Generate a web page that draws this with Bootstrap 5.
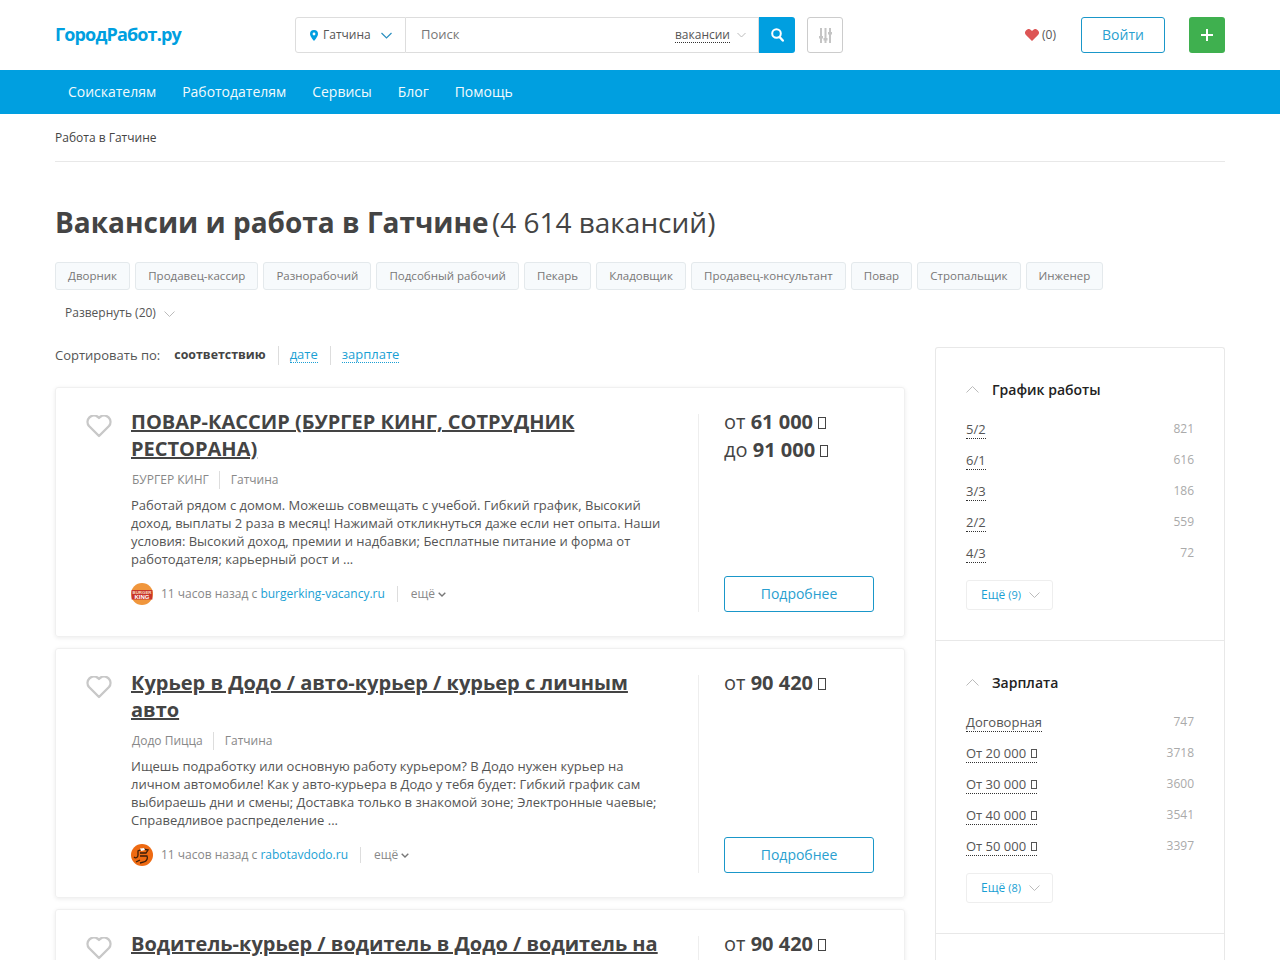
<!DOCTYPE html>
<html lang="ru">
<head>
    <meta charset="UTF-8">
    <meta name="viewport" content="width=device-width, initial-scale=1.0">
    <link href="https://cdn.jsdelivr.net/npm/bootstrap@5.3.0/dist/css/bootstrap.min.css" rel="stylesheet">
    <script src="https://cdn.jsdelivr.net/npm/bootstrap@5.3.0/dist/js/bootstrap.bundle.min.js"></script>
    <title>Вакансии и работа в Гатчине</title>
    <style>
        html, body { height: 960px; overflow: hidden; }
        body { font-family: "Open Sans", "Liberation Sans", sans-serif; font-size: 13px; color: #444; background: #fff; }
        a { color: inherit; }
        .wrap-main { width: 1170px; margin: 0 auto; }
        /* the rouble sign has no glyph on the page, it shows as an empty box */
        .rub-box { display: inline-block; width: .38em; height: .6em; border: 1px solid currentColor; vertical-align: -.02em; }

        /* header */
        .top-head { height: 70px; }
        .site-logo { width: 240px; font-size: 18px; font-weight: 700; color: #009fe0; letter-spacing: -.85px; text-decoration: none; margin-top: -2px; }
        .search-box { width: 500px; height: 36px; }
        .city-pick { width: 111px; border: 1px solid #ddd; border-radius: 3px 0 0 3px; padding-left: 14px; font-size: 12px; color: #555; }
        .city-pick .pin { margin-right: 5px; }
        .city-pick .arr { margin-left: 10px; }
        .search-field { flex: 1; border: 1px solid #ddd; border-left: 0; padding: 0 12px 0 15px; }
        .search-field span.ph { color: #777; font-size: 13px; }
        .kind-pick { font-size: 12px; color: #555; border-bottom: 1px dotted #333; line-height: 15px; margin-right: 7px; }
        .search-go { width: 36px; height: 36px; background: #009fe0; border: 0; border-radius: 0 3px 3px 0; padding: 0; }
        .filter-btn { width: 36px; height: 36px; border: 1px solid #ccc; border-radius: 3px; margin-left: 12px; }
        .fav-link { font-size: 12px; color: #555; margin-right: 25px; }
        .fav-link svg { margin-right: 3px; }
        .login-btn { width: 84px; height: 36px; border: 1px solid #1a97c9; border-radius: 3px; color: #2a9fd0; font-size: 14px; padding: 0; line-height: 34px; margin-right: 24px; }
        .plus-btn { width: 36px; height: 36px; border: 0; border-radius: 3px; background: #3fb04f; padding: 0; }

        .blue-bar { height: 44px; background: #009fe0; }
        .blue-bar .nav-link { color: #fff; font-size: 13.98px; padding: 0; margin: 0 13px; line-height: 44px; opacity: .95; }

        .crumbs { height: 48px; line-height: 47px; font-size: 12px; color: #444; border-bottom: 1px solid #e8e8e8; }

        .page-title { margin: 43px 0 0; height: 34px; line-height: 34px; font-size: 28px; font-weight: 700; color: #444; }
        .page-title span { font-weight: 400; font-size: 28px; margin-left: -4px; }

        .tag-row { margin-top: 23px; gap: 5px; }
        .tag-item { height: 28px; line-height: 26px; padding: 0 12.1px; font-size: 11.5px; color: #777; background: #f7fafc; border: 1px solid #e4e9ec; border-radius: 3px; text-decoration: none; }
        .expand-row { margin-top: 15px; padding-left: 10px; font-size: 12px; color: #555; line-height: 16px; }
        .expand-row svg { margin-left: 8px; }

        .sort-row { height: 20px; margin-bottom: 22px; font-size: 13px; line-height: 20px; color: #555; }
        .sort-row b { color: #444; font-weight: 700; margin-left: 14px; padding-right: 12px; font-size: 12.4px; }
        .sort-opt { color: #1a9fd4; text-decoration: none; border-bottom: 1px dotted #1a9fd4; line-height: 15px; }
        .sort-sep { width: 1px; height: 19px; background: #ddd; margin-right: 11px; }

        /* vacancies */
        .main-col { width: 850px; padding-top: 24px; }
        .vac-item { height: 250px; margin-bottom: 11px; border: 1px solid #f0f0f0; border-radius: 3px; box-shadow: 0 1px 4px rgba(0,0,0,.08); padding: 26px 30px 25px; }
        .vac-heart { width: 45px; padding-top: 1px; flex: none; }
        .vac-body { width: 535px; flex: none; }
        .vac-title { font-size: 20px; font-weight: 700; line-height: 27px; color: #444; margin: -6px 0 0; }
        .vac-title a { color: #444; }
        .vac-meta { margin-top: 8px; height: 20px; line-height: 20px; font-size: 12px; color: #888; padding-left: 1px; }
        .vac-meta i { width: 1px; height: 18px; background: #ddd; margin: 0 11px 0 10px; }
        .vac-text { font-size: 13px; line-height: 18px; color: #555; margin: 6px 0 0; }
        .vac-foot { margin-top: 15px; height: 22px; font-size: 12px; color: #888; }
        .vac-foot svg.logo { margin-right: 8px; flex: none; }
        .vac-foot a { color: #1a9fd4; text-decoration: none; }
        .vac-foot i { width: 1px; height: 16px; background: #ddd; margin: 0 13px 0 12px; }
        .vac-foot em { font-style: normal; }
        .vac-foot em svg { margin-left: 3px; }
        .vac-side { margin-left: 32px; padding-left: 25px; border-left: 1px solid #eee; width: 176px; flex: none; height: 198px; }
        .price-line { font-size: 20px; line-height: 27px; color: #444; margin-top: -6px; height: 27px; margin-bottom: 7px; white-space: nowrap; }
        .price-line b { font-weight: 700; }
        .detail-btn { width: 150px; height: 36px; border: 1px solid #1a97c9; border-radius: 3px; color: #2a9fd0; font-size: 14px; line-height: 34px; padding: 0; }

        /* filters */
        .side-col { width: 290px; margin-left: 30px; margin-top: 26px; height: 700px; border: 1px solid #e8e8e8; border-bottom: 0; border-radius: 3px 3px 0 0; }
        .filter-group { height: 293px; padding: 32px 30px 0; border-bottom: 1px solid #e8e8e8; }
        .filter-group:last-child { border-bottom: 0; }
        .filter-head { font-size: 14px; font-weight: 600; color: #222; height: 19px; line-height: 19px; margin-bottom: 23px; }
        .filter-head svg { margin-right: 13px; }
        .filter-line { height: 31px; font-size: 13px; color: #555; }
        .filter-line a { color: #555; text-decoration: none; border-bottom: 1px dotted #333; line-height: 15px; height: 17px; }
        .filter-line > span { font-size: 12px; color: #aaa; margin-top: -2px; }
        .filter-line .rub-box { width: 6px; height: 9px; margin-left: 1px; vertical-align: 0; }
        .more-btn { margin-top: 3px; width: 87px; height: 30px; border: 1px solid #eee; border-radius: 3px; font-size: 12px; color: #1a9fd4; padding: 0 0 0 14px; }
        .more-btn small { font-size: 11px; margin-left: 3px; }
        .more-btn svg { margin-left: 8px; }
    </style>
</head>
<body>

    <!-- Header -->
    <div class="wrap-main top-head d-flex align-items-center">
        <a class="site-logo" href="#">ГородРабот.ру</a>
        <div class="search-box d-flex">
            <div class="city-pick d-flex align-items-center">
                <svg class="pin" width="8" height="11" viewBox="0 0 8 11"><path fill="#009fe0" d="M4 0a4 4 0 0 0-4 4c0 2.600 4 7 4 7s4-4.400 4-7a4 4 0 0 0-4-4zm0 5.400A1.400 1.400 0 1 1 4 2.600a1.400 1.400 0 0 1 0 2.800z"/></svg>
                Гатчина
                <svg class="arr" width="11" height="7" viewBox="0 0 11 7"><path fill="none" stroke="#2a8fc0" stroke-width="1.200" d="M.5 1l5 5 5-5"/></svg>
            </div>
            <div class="search-field d-flex align-items-center justify-content-between">
                <span class="ph">Поиск</span>
                <div class="d-flex align-items-center">
                    <span class="kind-pick">вакансии</span>
                    <svg width="9" height="6" viewBox="0 0 9 6"><path fill="none" stroke="#bbb" d="M.5 1l4 4 4-4"/></svg>
                </div>
            </div>
            <button class="search-go d-flex align-items-center justify-content-center" type="button" aria-label="Найти">
                <svg width="13" height="14" viewBox="0 0 13 14"><circle cx="5.500" cy="5.500" r="4.300" fill="none" stroke="#fff" stroke-width="2"/><path stroke="#fff" stroke-width="2.400" stroke-linecap="round" d="M8.800 9.200l3 3.300"/></svg>
            </button>
        </div>
        <div class="filter-btn d-flex align-items-center justify-content-center">
            <svg width="13" height="15" viewBox="0 0 13 15"><g fill="#c4c4c4"><rect x="1" y="0" width="2" height="15"/><rect x="5.500" y="0" width="2" height="15"/><rect x="10" y="0" width="2" height="15"/><rect x="0" y="8" width="4" height="2.500"/><rect x="4.500" y="10" width="4" height="2.500"/><rect x="9" y="4" width="4" height="2.500"/></g></svg>
        </div>
        <div class="ms-auto d-flex align-items-center">
            <div class="fav-link d-flex align-items-center">
                <svg width="14" height="12" viewBox="0 0 14 12"><path fill="#dd5555" d="M7 12L1.200 6.200A3.500 3.500 0 0 1 6.200 1.200L7 2l.8-.8a3.500 3.500 0 0 1 5 5z"/></svg>
                (0)
            </div>
            <button class="btn login-btn" type="button">Войти</button>
            <button class="plus-btn d-flex align-items-center justify-content-center" type="button" aria-label="Добавить">
                <svg width="12" height="12" viewBox="0 0 12 12"><path stroke="#fff" stroke-width="2" d="M6 0v12M0 6h12"/></svg>
            </button>
        </div>
    </div>

    <!-- Navigation -->
    <nav class="blue-bar">
        <div class="wrap-main">
            <ul class="nav">
                <li class="nav-item"><a class="nav-link" href="#">Соискателям</a></li>
                <li class="nav-item"><a class="nav-link" href="#">Работодателям</a></li>
                <li class="nav-item"><a class="nav-link" href="#">Сервисы</a></li>
                <li class="nav-item"><a class="nav-link" href="#">Блог</a></li>
                <li class="nav-item"><a class="nav-link" href="#">Помощь</a></li>
            </ul>
        </div>
    </nav>

    <div class="wrap-main">
        <div class="crumbs">Работа в Гатчине</div>

        <h1 class="page-title">Вакансии и работа в Гатчине <span>(4 614 вакансий)</span></h1>

        <div class="tag-row d-flex">
            <a class="tag-item" href="#">Дворник</a>
            <a class="tag-item" href="#">Продавец-кассир</a>
            <a class="tag-item" href="#">Разнорабочий</a>
            <a class="tag-item" href="#">Подсобный рабочий</a>
            <a class="tag-item" href="#">Пекарь</a>
            <a class="tag-item" href="#">Кладовщик</a>
            <a class="tag-item" href="#">Продавец-консультант</a>
            <a class="tag-item" href="#">Повар</a>
            <a class="tag-item" href="#">Стропальщик</a>
            <a class="tag-item" href="#">Инженер</a>
        </div>
        <div class="expand-row">Развернуть (20)<svg width="11" height="6" viewBox="0 0 11 6"><path fill="none" stroke="#bbb" d="M.5.5l5 5 5-5"/></svg></div>

        <div class="d-flex align-items-start">
            <div class="main-col">
                <div class="sort-row d-flex align-items-center">
                    Сортировать по:
                    <b>соответствию</b>
                    <i class="sort-sep"></i><a class="sort-opt me-2" href="#">дате</a>
                    <i class="sort-sep ms-1"></i><a class="sort-opt" href="#">зарплате</a>
                </div>

                <!-- Vacancy 1 -->
                <div class="vac-item d-flex">
                    <div class="vac-heart">
                        <svg width="26" height="23" viewBox="0 0 26 23"><path fill="none" stroke="#c8c8c8" stroke-width="2.400" stroke-linejoin="round" d="M13 21L3 11A6.400 6.400 0 0 1 12 2l1 1 1-1a6.400 6.400 0 0 1 9 9z"/></svg>
                    </div>
                    <div class="vac-body">
                        <h2 class="vac-title"><a href="#">ПОВАР-КАССИР (БУРГЕР КИНГ, СОТРУДНИК РЕСТОРАНА)</a></h2>
                        <div class="vac-meta d-flex align-items-center">БУРГЕР КИНГ<i></i>Гатчина</div>
                        <p class="vac-text">Работай рядом с домом. Можешь совмещать с учебой. Гибкий график, Высокий доход, выплаты 2 раза в месяц! Нажимай откликнуться даже если нет опыта. Наши условия: Высокий доход, премии и надбавки; Бесплатные питание и форма от работодателя; карьерный рост и ...</p>
                        <div class="vac-foot d-flex align-items-center">
                            <svg class="logo" width="22" height="22" viewBox="0 0 22 22"><circle cx="11" cy="11" r="11" fill="#f0963c"/><path fill="#c9352a" d="M.6 7h20.800v9.500H.6z"/><text x="11" y="11" font-size="4.400" font-weight="700" text-anchor="middle" fill="#f7dcc0" font-family="Liberation Sans">BURGER</text><text x="11" y="16" font-size="6" font-weight="700" text-anchor="middle" fill="#fff" font-family="Liberation Sans">KING</text></svg>
                            11 часов назад с&nbsp;<a href="#">burgerking-vacancy.ru</a><i></i><em>ещё<svg width="8" height="5" viewBox="0 0 8 5"><path fill="none" stroke="#777" stroke-width="1.400" d="M.7.7L4 4 7.300.7"/></svg></em>
                        </div>
                    </div>
                    <div class="vac-side d-flex flex-column">
                        <div class="price-line">от <b>61 000</b> <span class="rub-box"></span></div>
                        <div class="price-line">до <b>91 000</b> <span class="rub-box"></span></div>
                        <button class="btn detail-btn mt-auto" type="button">Подробнее</button>
                    </div>
                </div>

                <!-- Vacancy 2 -->
                <div class="vac-item d-flex">
                    <div class="vac-heart">
                        <svg width="26" height="23" viewBox="0 0 26 23"><path fill="none" stroke="#c8c8c8" stroke-width="2.400" stroke-linejoin="round" d="M13 21L3 11A6.400 6.400 0 0 1 12 2l1 1 1-1a6.400 6.400 0 0 1 9 9z"/></svg>
                    </div>
                    <div class="vac-body">
                        <h2 class="vac-title"><a href="#">Курьер в Додо / авто-курьер / курьер с личным авто</a></h2>
                        <div class="vac-meta d-flex align-items-center">Додо Пицца<i></i>Гатчина</div>
                        <p class="vac-text">Ищешь подработку или основную работу курьером? В Додо нужен курьер на личном автомобиле! Как у авто-курьера в Додо у тебя будет: Гибкий график сам выбираешь дни и смены; Доставка только в знакомой зоне; Электронные чаевые; Справедливое распределение ...</p>
                        <div class="vac-foot d-flex align-items-center">
                            <svg class="logo" width="22" height="22" viewBox="0 0 22 22"><circle cx="11" cy="11" r="11" fill="#ee6a12"/><path fill="none" stroke="#3a1d0a" stroke-width="1.300" d="M3 13c2 2 4 0 4-2V7l5-2 5 1-2 3H9m0 3h7c1 2 0 5-3 6l-4 1M5 18l4-2"/><path fill="#fff" d="M9 4.500l4-.5 1 2-4 1z"/></svg>
                            11 часов назад с&nbsp;<a href="#">rabotavdodo.ru</a><i></i><em>ещё<svg width="8" height="5" viewBox="0 0 8 5"><path fill="none" stroke="#777" stroke-width="1.400" d="M.7.7L4 4 7.300.7"/></svg></em>
                        </div>
                    </div>
                    <div class="vac-side d-flex flex-column">
                        <div class="price-line">от <b>90 420</b> <span class="rub-box"></span></div>
                        <button class="btn detail-btn mt-auto" type="button">Подробнее</button>
                    </div>
                </div>

                <!-- Vacancy 3 -->
                <div class="vac-item d-flex">
                    <div class="vac-heart">
                        <svg width="26" height="23" viewBox="0 0 26 23"><path fill="none" stroke="#c8c8c8" stroke-width="2.400" stroke-linejoin="round" d="M13 21L3 11A6.400 6.400 0 0 1 12 2l1 1 1-1a6.400 6.400 0 0 1 9 9z"/></svg>
                    </div>
                    <div class="vac-body">
                        <h2 class="vac-title"><a href="#">Водитель-курьер / водитель в Додо / водитель на</a></h2>
                    </div>
                    <div class="vac-side">
                        <div class="price-line">от <b>90 420</b> <span class="rub-box"></span></div>
                    </div>
                </div>
            </div>

            <!-- Filters -->
            <aside class="side-col">
                <div class="filter-group">
                    <div class="filter-head d-flex align-items-center"><svg width="13" height="7" viewBox="0 0 13 7"><path fill="none" stroke="#bbb" d="M.5 6.500l6-6 6 6"/></svg>График работы</div>
                    <div class="filter-line d-flex justify-content-between"><a href="#">5/2</a><span>821</span></div>
                    <div class="filter-line d-flex justify-content-between"><a href="#">6/1</a><span>616</span></div>
                    <div class="filter-line d-flex justify-content-between"><a href="#">3/3</a><span>186</span></div>
                    <div class="filter-line d-flex justify-content-between"><a href="#">2/2</a><span>559</span></div>
                    <div class="filter-line d-flex justify-content-between"><a href="#">4/3</a><span>72</span></div>
                    <div class="more-btn d-flex align-items-center">Ещё <small>(9)</small><svg width="11" height="6" viewBox="0 0 11 6"><path fill="none" stroke="#bbb" d="M.5.5l5 5 5-5"/></svg></div>
                </div>
                <div class="filter-group">
                    <div class="filter-head d-flex align-items-center"><svg width="13" height="7" viewBox="0 0 13 7"><path fill="none" stroke="#bbb" d="M.5 6.500l6-6 6 6"/></svg>Зарплата</div>
                    <div class="filter-line d-flex justify-content-between"><a href="#">Договорная</a><span>747</span></div>
                    <div class="filter-line d-flex justify-content-between"><a href="#">От 20 000 <span class="rub-box"></span></a><span>3718</span></div>
                    <div class="filter-line d-flex justify-content-between"><a href="#">От 30 000 <span class="rub-box"></span></a><span>3600</span></div>
                    <div class="filter-line d-flex justify-content-between"><a href="#">От 40 000 <span class="rub-box"></span></a><span>3541</span></div>
                    <div class="filter-line d-flex justify-content-between"><a href="#">От 50 000 <span class="rub-box"></span></a><span>3397</span></div>
                    <div class="more-btn d-flex align-items-center">Ещё <small>(8)</small><svg width="11" height="6" viewBox="0 0 11 6"><path fill="none" stroke="#bbb" d="M.5.5l5 5 5-5"/></svg></div>
                </div>
                <div class="filter-group"></div>
            </aside>
        </div>
    </div>

</body>
</html>
